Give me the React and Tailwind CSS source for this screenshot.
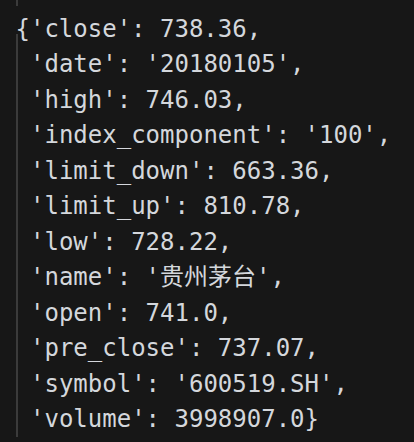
import React from "react";

const rows = [
  "'date': '20180105',",
  "'high': 746.03,",
  "'index_component': '100',",
  "'limit_down': 663.36,",
  "'limit_up': 810.78,",
  "'low': 728.22,",
  "'name': '贵州茅台',",
  "'open': 741.0,",
  "'pre_close': 737.07,",
  "'symbol': '600519.SH',",
  "'volume': 3998907.0}",
];

const App = () => {
  return (
    <div
      className="h-[442px] w-[414px] overflow-hidden bg-[#171717] text-[24px] leading-[35.45px] text-[#d4d7dc] whitespace-pre"
      style={{ fontFamily: '"DejaVu Sans Mono", "Noto Sans CJK SC", monospace' }}
    >
      {/* guide from the line above */}
      <div className="ml-[16px] h-[6px] w-[2px] bg-[#3b3b3b]"></div>
      <div className="mt-[6px] pl-[15.5px]">{"{'close': 738.36,"}</div>
      <div className="ml-[16px] -mt-[13.5px] border-l-2 border-[#3b3b3b] pt-[13.5px] pl-[12px]">
        {rows.map((row) => (
          <div key={row}>{row}</div>
        ))}
      </div>
    </div>
  );
};

export default App;
